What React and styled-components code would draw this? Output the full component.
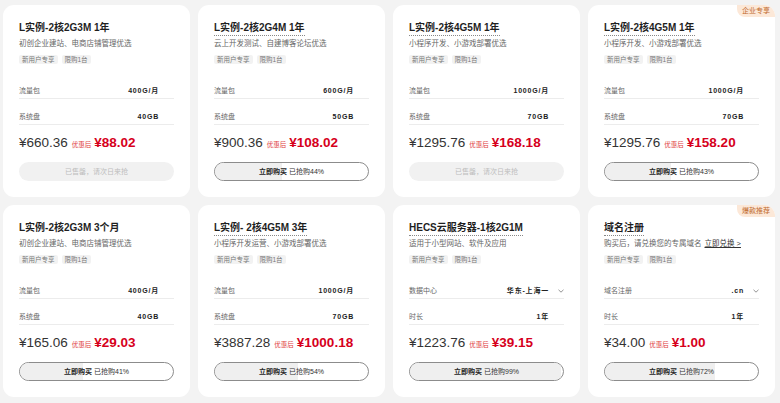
import styled, {createGlobalStyle} from "styled-components";

const GlobalStyle = createGlobalStyle`
  html, body {
    margin: 0;
    padding: 0;
    background: #f3f3f3;
  }

  body {
    font-family: "Liberation Sans", "Noto Sans CJK SC", sans-serif;
    color: #222;
  }
`;

const Grid = styled.main`
  display: grid;
  grid-template-columns: repeat(4, 187px);
  gap: 8px;
  padding: 5px 0 0 3px;
`;

const Card = styled.section`
  position: relative;
  display: flex;
  flex-direction: column;
  background: #fff;
  border-radius: 11px;
  padding: 16px 16px 15px;
  height: 192px;
  box-sizing: border-box;
`;

const Badge = styled.span`
  position: absolute;
  top: 0;
  right: 0;
  background: #fce8d8;
  color: #c06a2e;
  font-size: 7px;
  line-height: 12px;
  padding: 0 5px;
  border-radius: 0 11px 0 8px;
`;

const Title = styled.h3`
  align-self: flex-start;
  margin: 0;
  font-size: 10px;
  line-height: 13px;
  font-weight: 700;
  color: #1f1f1f;
  padding-bottom: 1px;
  border-bottom: 1px dotted ${({$tip}) => ($tip ? "#888" : "transparent")};
`;

const Desc = styled.p`
  margin: 3px 0 0;
  font-size: 7.5px;
  line-height: 10px;
  color: #666;
  white-space: nowrap;

  a {
    color: #333;
    text-decoration: underline;
    margin-left: 3px;
  }
`;

const Tags = styled.div`
  display: flex;
  gap: 4px;
  margin-top: 6px;
`;

const Tag = styled.span`
  background: #f2f2f2;
  color: #777;
  font-size: 6.5px;
  line-height: 9px;
  padding: 0 3px;
  border-radius: 2px;
`;

const Specs = styled.div`
  margin-top: 10px;
`;

const Row = styled.div`
  display: flex;
  align-items: center;
  height: 25px;
  box-sizing: border-box;
  padding: 12px 0 3px;
  border-bottom: 1px solid #ececec;
  font-size: 7px;
  line-height: 10px;
  & + & {
    height: 26px;
    padding-top: 13px;
  }
`;

const Label = styled.span`
  flex: 1;
  color: #666;
`;

const Value = styled.span`
  font-weight: 700;
  color: #222;
  letter-spacing: 0.8px;
`;

const Trail = styled.span`
  width: 15px;
  display: flex;
  justify-content: flex-end;
  color: #777;
`;

const PriceRow = styled.div`
  display: flex;
  align-items: baseline;
  height: 18px;
  margin-top: 11px;
  line-height: 1;
  overflow: visible;
`;

const Original = styled.span`
  font-size: 13.5px;
  color: #333;
`;

const After = styled.span`
  font-size: 6.5px;
  color: #e03a3a;
  margin: 0 3px 0 4px;
`;

const Final = styled.span`
  font-size: 13.5px;
  font-weight: 700;
  color: #d6001c;
`;

const BuyButton = styled.button`
  position: relative;
  overflow: hidden;
  margin-top: 8px;
  height: 19px;
  width: 100%;
  box-sizing: border-box;
  border-radius: 10px;
  border: 1px solid ${({$soldOut}) => ($soldOut ? "transparent" : "#8c8c8c")};
  background: ${({$soldOut}) => ($soldOut ? "#f1f1f1" : "#fff")};
  color: ${({$soldOut}) => ($soldOut ? "#bdbdbd" : "#333")};
  font-family: inherit;
  font-size: 7px;
  line-height: 17px;
  padding: 0;
  cursor: pointer;

  b {
    font-weight: 700;
    color: #222;
    margin-right: 2px;
  }
`;

const Fill = styled.span`
  position: absolute;
  left: 0;
  top: 0;
  bottom: 0;
  background: #efefef;
`;

const ButtonText = styled.span`
  position: relative;
`;

const Chevron = () => (
  <svg width="6" height="4" viewBox="0 0 6 4">
    <path d="M0.5 0.8 L3 3.2 L5.5 0.8" fill="none" stroke="#777" strokeWidth="0.8"/>
  </svg>
);

const cards = [
  {title: "L实例-2核2G3M 1年", desc: "初创企业建站、电商店铺管理优选", rows: [["流量包", "400G/月"], ["系统盘", "40GB"]], price: "660.36", final: "88.02", soldOut: true},
  {title: "L实例-2核2G4M 1年", tip: true, desc: "云上开发测试、自建博客论坛优选", rows: [["流量包", "600G/月"], ["系统盘", "50GB"]], price: "900.36", final: "108.02", sold: 44},
  {title: "L实例-2核4G5M 1年", tip: true, desc: "小程序开发、小游戏部署优选", rows: [["流量包", "1000G/月"], ["系统盘", "70GB"]], price: "1295.76", final: "168.18", soldOut: true},
  {title: "L实例-2核4G5M 1年", tip: true, badge: "企业专享", desc: "小程序开发、小游戏部署优选", rows: [["流量包", "1000G/月"], ["系统盘", "70GB"]], price: "1295.76", final: "158.20", sold: 43},
  {title: "L实例-2核2G3M 3个月", desc: "初创企业建站、电商店铺管理优选", rows: [["流量包", "400G/月"], ["系统盘", "40GB"]], price: "165.06", final: "29.03", sold: 41},
  {title: "L实例- 2核4G5M 3年", tip: true, desc: "小程序开发运营、小游戏部署优选", rows: [["流量包", "1000G/月"], ["系统盘", "70GB"]], price: "3887.28", final: "1000.18", sold: 54},
  {title: "HECS云服务器-1核2G1M", tip: true, desc: "适用于小型网站、软件及应用", rows: [["数据中心", "华东-上海一", true], ["时长", "1年"]], price: "1223.76", final: "39.15", sold: 99},
  {title: "域名注册", tip: true, badge: "爆款推荐", desc: "购买后，请兑换您的专属域名", link: "立即兑换 >", rows: [["域名注册", ".cn", true], ["时长", "1年"]], price: "34.00", final: "1.00", sold: 72},
];

const ProductCard = ({card}) => (
  <Card>
    {card.badge && <Badge>{card.badge}</Badge>}
    <Title $tip={card.tip}>{card.title}</Title>
    <Desc>
      {card.desc}
      {card.link && <a>{card.link}</a>}
    </Desc>
    <Tags>
      <Tag>新用户专享</Tag>
      <Tag>限购1台</Tag>
    </Tags>
    <Specs>
      {card.rows.map(([label, value, select]) => (
        <Row key={label}>
          <Label>{label}</Label>
          <Value>{value}</Value>
          <Trail>{select && <Chevron/>}</Trail>
        </Row>
      ))}
    </Specs>
    <PriceRow>
      <Original>¥{card.price}</Original>
      <After>优惠后</After>
      <Final>¥{card.final}</Final>
    </PriceRow>
    {card.soldOut ? (
      <BuyButton $soldOut>已售罄，请次日来抢</BuyButton>
    ) : (
      <BuyButton>
        <Fill style={{width: `${card.sold}%`}}/>
        <ButtonText><b>立即购买</b>已抢购{card.sold}%</ButtonText>
      </BuyButton>
    )}
  </Card>
);

const App = () => {
  return (
    <>
      <GlobalStyle/>
      <Grid>
        {cards.map((card, i) => (
          <ProductCard key={i} card={card}/>
        ))}
      </Grid>
    </>
  );
};

export default App;
